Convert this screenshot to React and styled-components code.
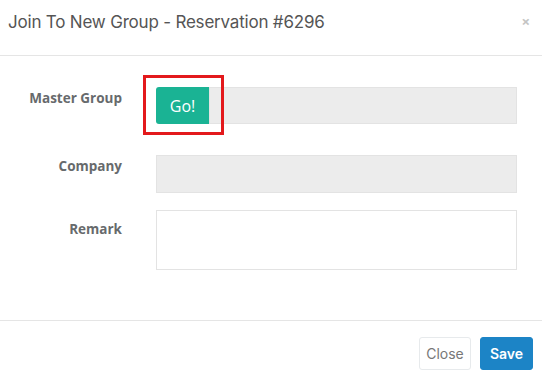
import React from 'react';
import styled, { createGlobalStyle } from 'styled-components';

const GlobalStyle = createGlobalStyle`
    html, body {
        margin: 0;
        padding: 0;
        background: #ffffff;
    }
    body {
        font-family: "Open Sans", "Liberation Sans", sans-serif;
    }
    * {
        box-sizing: border-box;
    }
`;

const StyledModal = styled.div`
    width: 542px;
    height: 380px;
    background: #ffffff;
    display: flex;
    flex-direction: column;
`;

const StyledHeader = styled.div`
    height: 56px;
    padding: 0 12px 0 8px;
    border-bottom: 1px solid #e5e5e5;
    display: flex;
    align-items: center;
    justify-content: space-between;
`;

const StyledTitle = styled.h4`
    margin: 0 0 12px;
    font-family: Inter, "Open Sans", sans-serif;
    font-size: 17px;
    font-weight: 400;
    color: #555555;
    letter-spacing: -0.2px;
`;

const StyledDismiss = styled.span`
    margin-bottom: 12px;
    font-size: 15px;
    font-weight: 700;
    color: #c4c4c4;
    line-height: 1;
`;

const StyledBody = styled.div`
    flex: 1;
    padding-top: 31px;
    border-bottom: 1px solid #e5e5e5;
`;

const StyledRow = styled.div`
    display: flex;
    gap: 34px;
    margin-bottom: ${({ $gap }) => $gap}px;
`;

const StyledLabel = styled.label`
    width: 122px;
    text-align: right;
    font-size: 13.5px;
    font-weight: 700;
    line-height: 20px;
    color: #676a6c;
    padding-top: ${({ $offset }) => $offset}px;
`;

const StyledInputGroup = styled.div`
    position: relative;
    width: 361px;
    display: flex;
`;

const StyledField = styled.div`
    flex: 1;
    height: ${({ $height }) => $height}px;
    background: ${({ $disabled }) => ($disabled ? '#ececec' : '#ffffff')};
    border: 1px solid #e3e3e3;
`;

const StyledGoButton = styled.button`
    position: relative;
    width: 53px;
    height: 37px;
    border: none;
    border-radius: 3px 0 0 3px;
    background: #1ab394;
    color: #ffffff;
    font-family: inherit;
    font-size: 16px;

    &::after {
        content: '';
        position: absolute;
        top: -12px;
        left: -13px;
        right: -15px;
        bottom: -11px;
        border: 3px solid #e3191c;
    }
`;

const StyledFooter = styled.div`
    height: 59px;
    padding: 6px 9px 0 0;
    display: flex;
    align-items: center;
    justify-content: flex-end;
    gap: 9px;
`;

const StyledButton = styled.button`
    height: 33px;
    width: ${({ $primary }) => ($primary ? 53 : 52)}px;
    padding: 0;
    border-radius: 3px;
    border: 1px solid ${({ $primary }) => ($primary ? '#1c84c6' : '#e7eaec')};
    background: ${({ $primary }) => ($primary ? '#1c84c6' : '#ffffff')};
    color: ${({ $primary }) => ($primary ? '#ffffff' : '#777777')};
    font-family: Inter, "Open Sans", sans-serif;
    font-size: 14px;
    font-weight: ${({ $primary }) => ($primary ? 600 : 400)};
`;

const App = () => {
    return (
        <StyledModal>
            <GlobalStyle />
            <StyledHeader>
                <StyledTitle>Join To New Group - Reservation #6296</StyledTitle>
                <StyledDismiss>×</StyledDismiss>
            </StyledHeader>
            <StyledBody>
                <StyledRow $gap={31}>
                    <StyledLabel $offset={1}>Master Group</StyledLabel>
                    <StyledInputGroup>
                        <StyledGoButton>Go!</StyledGoButton>
                        <StyledField $disabled $height={37} />
                    </StyledInputGroup>
                </StyledRow>
                <StyledRow $gap={17}>
                    <StyledLabel $offset={1}>Company</StyledLabel>
                    <StyledInputGroup>
                        <StyledField $disabled $height={38} />
                    </StyledInputGroup>
                </StyledRow>
                <StyledRow $gap={0}>
                    <StyledLabel $offset={9}>Remark</StyledLabel>
                    <StyledInputGroup>
                        <StyledField $height={60} />
                    </StyledInputGroup>
                </StyledRow>
            </StyledBody>
            <StyledFooter>
                <StyledButton>Close</StyledButton>
                <StyledButton $primary>Save</StyledButton>
            </StyledFooter>
        </StyledModal>
    );
};

export default App;
